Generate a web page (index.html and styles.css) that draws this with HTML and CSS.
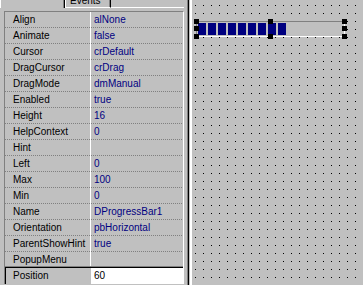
FILE: index.html
```html
<!DOCTYPE html>
<html>
<head>
<meta charset="UTF-8">
<title>Object Inspector</title>
<link rel="stylesheet" href="styles.css">
</head>
<body>

	<div class="app">

	<div class="inspector">
		<div class="tabs">
			<div class="tab tab-sel"><span>Properties</span></div>
			<div class="tab"><span>Events</span></div>
			<div class="tab-rest"></div>
		</div>

		<div class="page">
			<div class="grid">
				<div class="row"><div class="name">Align</div><div class="value">alNone</div></div>
				<div class="row"><div class="name">Animate</div><div class="value">false</div></div>
				<div class="row"><div class="name">Cursor</div><div class="value">crDefault</div></div>
				<div class="row"><div class="name">DragCursor</div><div class="value">crDrag</div></div>
				<div class="row"><div class="name">DragMode</div><div class="value">dmManual</div></div>
				<div class="row"><div class="name">Enabled</div><div class="value">true</div></div>
				<div class="row"><div class="name">Height</div><div class="value">16</div></div>
				<div class="row"><div class="name">HelpContext</div><div class="value">0</div></div>
				<div class="row"><div class="name">Hint</div><div class="value"></div></div>
				<div class="row"><div class="name">Left</div><div class="value">0</div></div>
				<div class="row"><div class="name">Max</div><div class="value">100</div></div>
				<div class="row"><div class="name">Min</div><div class="value">0</div></div>
				<div class="row"><div class="name">Name</div><div class="value">DProgressBar1</div></div>
				<div class="row"><div class="name">Orientation</div><div class="value">pbHorizontal</div></div>
				<div class="row"><div class="name">ParentShowHint</div><div class="value">true</div></div>
				<div class="row"><div class="name">PopupMenu</div><div class="value"></div></div>
				<div class="row sel"><div class="name">Position</div><div class="value">60</div></div>
			</div>
		</div>
	</div>

	<div class="splitter"></div>

	<div class="form">
		<div class="pbar-wrap">
			<div class="pbar">
				<div class="block"></div>
				<div class="block"></div>
				<div class="block"></div>
				<div class="block"></div>
				<div class="block"></div>
				<div class="block"></div>
				<div class="block"></div>
				<div class="block"></div>
				<div class="block"></div>
			</div>
			<div class="grab g-tl"></div>
			<div class="grab g-tm"></div>
			<div class="grab g-tr"></div>
			<div class="grab g-ml"></div>
			<div class="grab g-mr"></div>
			<div class="grab g-bl"></div>
			<div class="grab g-bm"></div>
			<div class="grab g-br"></div>
		</div>
	</div>

	</div>

</body>
</html>
```

FILE: styles.css
```css
body {
	margin: 0;
	background: #c0c0c0;
	font-family: "Liberation Sans", Arial, sans-serif;
	font-size: 10px;
	overflow: hidden;
}

.app {
	display: flex;
	width: 363px;
	height: 285px;
	overflow: hidden;
}

/* object inspector */
.inspector {
	width: 184px;
	flex: none;
	display: flex;
	flex-direction: column;
}

.tabs {
	display: flex;
	height: 8px;
	flex: none;
}

.tab {
	overflow: hidden;
	line-height: 10px;
	white-space: nowrap;
}
.tab span {
	display: block;
	margin-top: -4px;
	padding-left: 4px;
}
.tab-sel {
	width: 63px;
	border-left: 1px solid #fff;
	border-right: 1px solid #000;
	box-shadow: inset -1px 0 #808080;
}
.tab-sel span {
	margin-top: -10px;
}
.tab:not(.tab-sel) {
	width: 46px;
	border-left: 1px solid #fff;
	border-right: 1px solid #000;
	border-bottom: 1px solid #fff;
	box-shadow: inset -1px 0 #808080;
	box-sizing: border-box;
}
.tab-rest {
	flex: 1;
	border-bottom: 1px solid #fff;
	box-sizing: border-box;
}

.page {
	flex: 1;
	padding: 3px 0 0 4px;
}

.grid {
	border-top: 1px solid #808080;
	border-left: 1px solid #808080;
	border-right: 1px solid #fff;
}

.row {
	display: flex;
	height: 16px;
	background: linear-gradient(to right, #808080 1px, transparent 1px) 0 100% / 2px 1px repeat-x;
}
.row .name {
	width: 85px;
	flex: none;
	padding-left: 8px;
	box-sizing: border-box;
	line-height: 15px;
	white-space: nowrap;
	overflow: hidden;
}
.row .value {
	flex: 1;
	border-left: 1px solid #fff;
	padding-left: 3px;
	line-height: 15px;
	color: #000080;
	white-space: nowrap;
	overflow: hidden;
}

.row.sel {
	position: relative;
	margin-top: -1px;
	border-top: 1px solid #000;
	box-shadow: 0 -1px #808080;
	background: none;
}
.row.sel .name {
	box-shadow: inset 1px 0 #000;
}
.row.sel .value {
	background: #fff;
	border-left-color: #c0c0c0;
	color: #000;
}

/* splitter between inspector and form */
.splitter {
	width: 10px;
	flex: none;
	background: linear-gradient(to right, #c0c0c0 3px, #808080 3px 4px, #000 4px 5px, #c0c0c0 5px 6px, #fff 6px 8px, #c0c0c0 8px);
}

/* form designer */
.form {
	flex: 1;
	background: #c0c0c0 conic-gradient(at 1px 1px, #c0c0c0 75%, #000 0) 1px 5px / 8px 8px;
	padding: 21px 0 0 2px;
}

.pbar-wrap {
	position: relative;
	width: 149px;
	height: 16px;
}

.pbar {
	display: flex;
	gap: 2px;
	height: 16px;
	box-sizing: border-box;
	padding: 1px;
	border-top: 1px solid #808080;
	border-left: 1px solid #808080;
	border-bottom: 1px solid #fff;
	border-right: 1px solid #fff;
	background: #c0c0c0;
}
.block {
	width: 8px;
	background: #000080;
}

.grab {
	position: absolute;
	width: 5px;
	height: 5px;
	background: #000;
}
.g-tl { left: -2px; top: -2px; }
.g-tm { left: 72px; top: -2px; }
.g-tr { right: -2px; top: -2px; }
.g-ml { left: -2px; top: 5px; }
.g-mr { right: -2px; top: 5px; }
.g-bl { left: -2px; bottom: -2px; }
.g-bm { left: 72px; bottom: -2px; }
.g-br { right: -2px; bottom: -2px; }
```
